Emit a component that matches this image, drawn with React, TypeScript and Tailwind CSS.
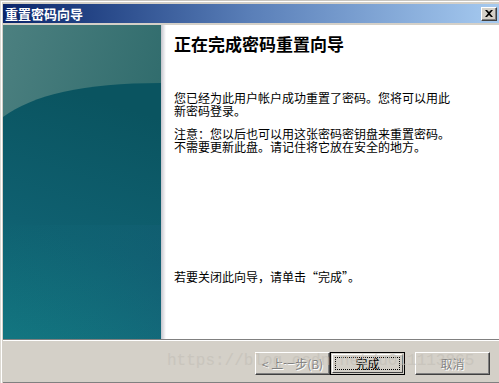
export default function App() {
  const cjk = { fontFamily: '"Noto Sans CJK SC", "Noto Sans", sans-serif' }

  return (
    <div
      className="relative flex h-[383px] w-[499px] flex-col overflow-hidden bg-[#d4d0c8] pt-[3px] pl-[3px]"
      style={{ ...cjk, boxShadow: "inset 1px 1px 0 #dcd9d2, inset 2px 2px 0 #ffffff" }}
    >
      <div className="absolute inset-x-0 top-0 h-px bg-[#c9c6c0]" />
      {/* Title bar */}
      <div className="mt-px flex h-[19px] shrink-0 items-center justify-between bg-gradient-to-r from-[#0a246a] via-[#5a7fb8] to-[#a6caf0] pl-[2px] pr-[2px]">
        <span className="text-[13px] leading-none font-bold text-white">重置密码向导</span>
        <button className="flex h-[14px] w-[16px] items-center justify-center border border-t-white border-l-white border-r-[#404040] border-b-[#404040] bg-[#d4d0c8] shadow-[inset_-1px_-1px_#808080]">
          <svg width="8" height="7" viewBox="0 0 8 7">
            <path d="M0 0h2l2 2 2-2h2L5 3.5 8 7H6L4 5 2 7H0l3-3.5z" fill="#000" />
          </svg>
        </button>
      </div>

      {/* Body */}
      <div className="mt-[2px] flex h-[314px] shrink-0">
        <div className="w-[158px] shrink-0">
          <svg width="158" height="314" viewBox="0 0 158 314">
            <defs>
              <linearGradient id="top" x1="0" y1="0" x2="1" y2="0.6">
                <stop offset="0" stopColor="#4c8080" />
                <stop offset="1" stopColor="#2b6869" />
              </linearGradient>
              <linearGradient id="low" x1="0.3" y1="0" x2="0.1" y2="1">
                <stop offset="0" stopColor="#0a5460" />
                <stop offset="0.55" stopColor="#0f6070" />
                <stop offset="1" stopColor="#137580" />
              </linearGradient>
              <linearGradient id="side" x1="0" y1="0" x2="1" y2="0">
                <stop offset="0" stopColor="#137a84" stopOpacity="0" />
                <stop offset="1" stopColor="#17607a" stopOpacity="0.6" />
              </linearGradient>
            </defs>
            <rect width="158" height="314" fill="url(#top)" />
            <path d="M0 92 C 30 70, 80 58, 158 58 L158 314 L0 314 Z" fill="url(#low)" />
            <path d="M0 200 L158 200 L158 314 L0 314 Z" fill="url(#side)" opacity="0.5" />
          </svg>
        </div>
        <div className="relative flex flex-1 flex-col bg-white pl-[13px]">
          <div className="absolute inset-y-0 left-0 w-[5px] bg-gradient-to-r from-[#c4c4cc] to-white" />
          <h1 className="mt-[9px] text-[17px] leading-[20px] font-bold text-black">
            正在完成密码重置向导
          </h1>
          <p className="mt-[37px] text-[12px] leading-[13px] text-black">
            您已经为此用户帐户成功重置了密码。您将可以用此
            <br />
            新密码登录。
          </p>
          <p className="mt-[10px] text-[12px] leading-[13px] text-black">
            注意：您以后也可以用这张密码密钥盘来重置密码。
            <br />
            不需要更新此盘。请记住将它放在安全的地方。
          </p>
          <p className="mt-auto mb-[56px] text-[12px] leading-[13px] text-black">
            若要关闭此向导，请单击“完成”。
          </p>
        </div>
      </div>

      {/* Separator */}
      <div className="h-px shrink-0 bg-[#808080]" />
      <div className="h-px shrink-0 bg-white" />

      {/* Footer */}
      <div className="flex h-[41px] shrink-0 items-start justify-end pt-[11px] pr-[9px]">
        <button className="flex h-[23px] w-[75px] items-center justify-center border border-t-white border-l-white border-r-[#404040] border-b-[#404040] bg-[#d4d0c8] text-[12px] text-[#808080] shadow-[inset_-1px_-1px_#808080] [text-shadow:1px_1px_0_#ffffff]">
          &lt; 上一步(B)
        </button>
        <button className="flex h-[23px] w-[75px] items-center justify-center border border-black bg-[#d4d0c8] p-px">
          <span className="flex h-full w-full items-center justify-center border border-t-white border-l-white border-r-[#404040] border-b-[#404040] p-[2px]">
            <span className="flex h-full w-full items-center justify-center border border-dotted border-black text-[12px] leading-none text-black">
              完成
            </span>
          </span>
        </button>
        <button className="ml-[10px] flex h-[23px] w-[75px] items-center justify-center border border-t-white border-l-white border-r-[#404040] border-b-[#404040] bg-[#d4d0c8] text-[12px] text-[#808080] shadow-[inset_-1px_-1px_#808080] [text-shadow:1px_1px_0_#ffffff]">
          取消
        </button>
      </div>
      <div className="h-[2px] shrink-0 bg-[#808080]" />

      {/* Watermark */}
      <div
        className="pointer-events-none absolute top-[351px] left-[167px] text-[16px] leading-[20px] text-[#c2beb6] opacity-60"
        style={{ fontFamily: '"Liberation Mono", monospace' }}
      >
        https://blog.csdn.net/u011113865
      </div>
    </div>
  )
}
